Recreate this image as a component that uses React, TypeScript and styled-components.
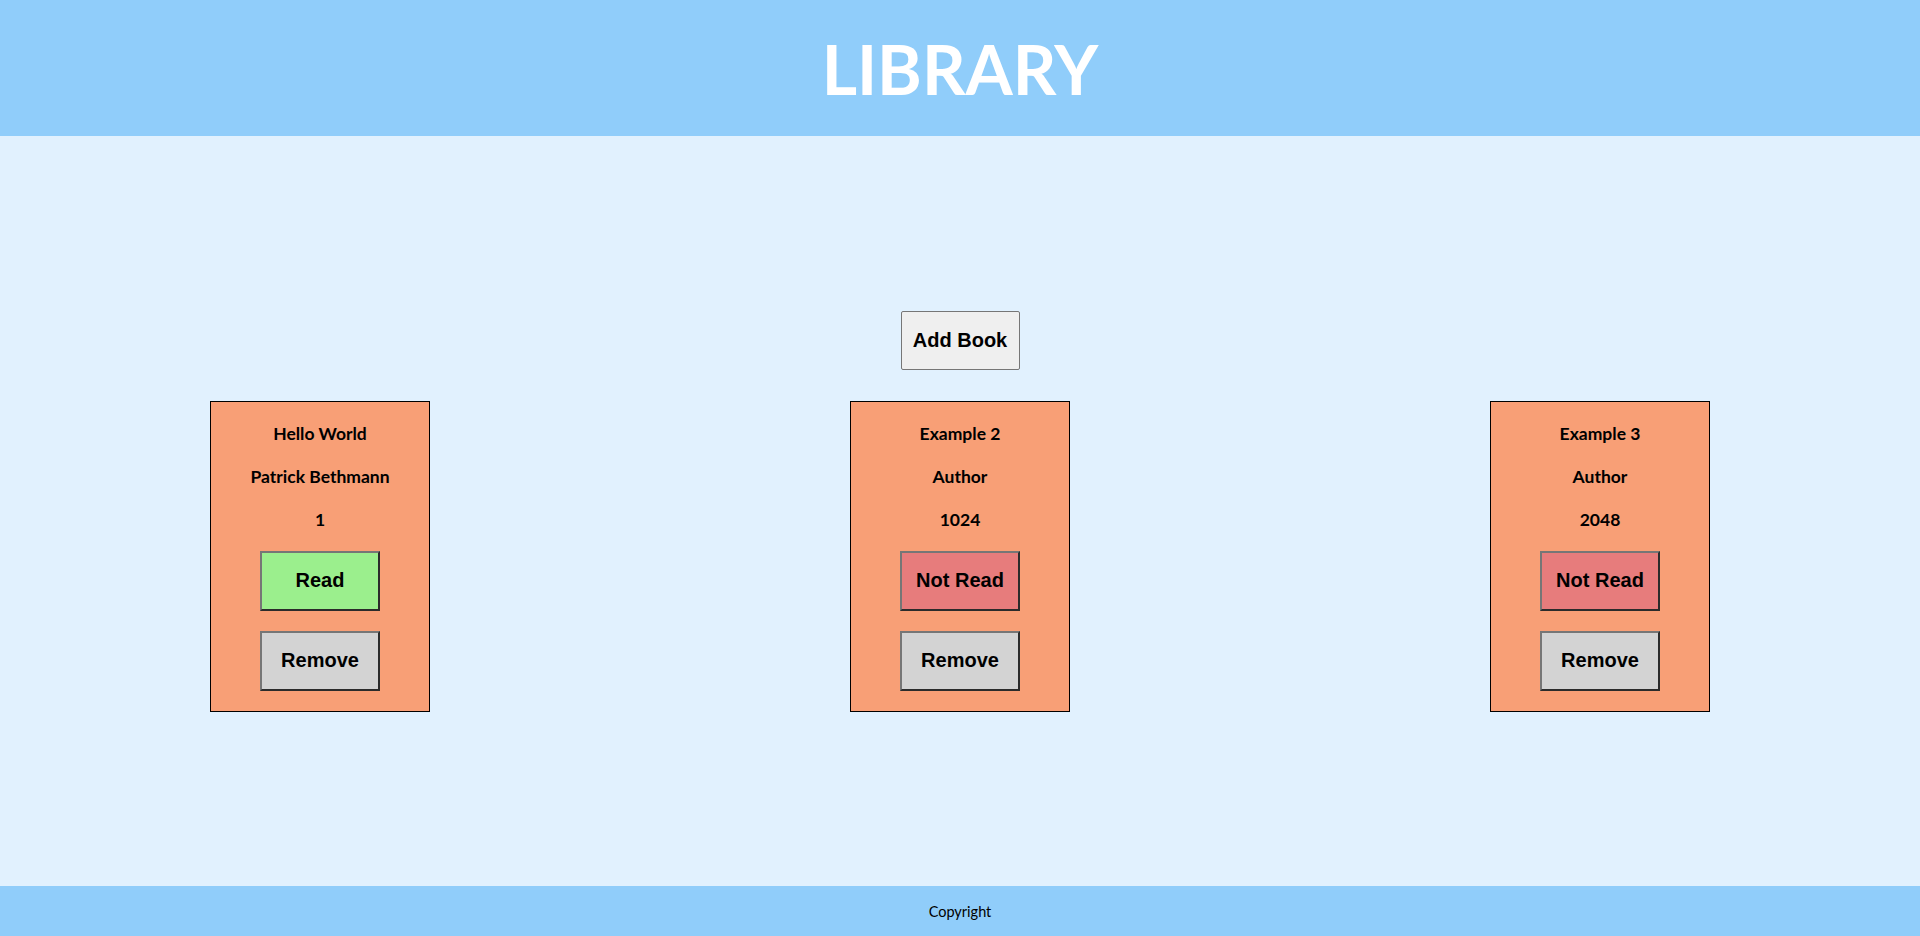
import React from "react";
import styled, { createGlobalStyle } from "styled-components";

const Global = createGlobalStyle`
  html, body { margin: 0; padding: 0; }
  body { font-family: Lato, "Open Sans", sans-serif; background: #e1f1fe; }
`;

const Page = styled.div`
  display: flex;
  flex-direction: column;
  min-height: 936px;
`;

const Header = styled.header`
  height: 136px;
  background: #90cdfa;
  display: flex;
  align-items: center;
  justify-content: center;
`;

const Title = styled.h1`
  margin: 0;
  padding-top: 2px;
  color: #ffffff;
  font-family: Lato, sans-serif;
  font-weight: 700;
  font-size: 68px;
  line-height: 1;
`;

const Main = styled.main`
  flex: 1;
  display: flex;
  flex-direction: column;
  align-items: center;
  justify-content: center;
  gap: 31px;
`;

const AddButton = styled.button`
  width: 119px;
  height: 59px;
  background: #efefef;
  border: 1px solid #767676;
  border-radius: 2px;
  font-family: Arial, "Liberation Sans", sans-serif;
  font-weight: 700;
  font-size: 20px;
  color: #000;
  padding: 0;
`;

const Grid = styled.div`
  width: 100%;
  display: grid;
  grid-template-columns: repeat(3, 1fr);
  justify-items: center;
`;

const Card = styled.div`
  width: 218px;
  border: 1px solid #000;
  background: #f89f76;
  padding: 20px 0;
  display: flex;
  flex-direction: column;
  align-items: center;
  gap: 20px;
`;

const Line = styled.p`
  margin: 0;
  font-family: Lato, sans-serif;
  font-weight: 700;
  font-size: 17.5px;
  line-height: 23px;
  color: #000;
`;

const CardButton = styled.button<{ $bg: string }>`
  width: 120px;
  height: 60px;
  background: ${(p) => p.$bg};
  border: 2px solid;
  border-color: #767676 #2b2b2b #2b2b2b #767676;
  font-family: Arial, "Liberation Sans", sans-serif;
  font-weight: 700;
  font-size: 20px;
  color: #000;
  padding: 0;
`;

const Footer = styled.footer`
  height: 50px;
  background: #90cdfa;
  display: flex;
  align-items: center;
  justify-content: center;
  font-family: Lato, sans-serif;
  font-size: 14.5px;
  color: #000;
`;

const books = [
  { title: "Hello World", author: "Patrick Bethmann", pages: "1", read: true },
  { title: "Example 2", author: "Author", pages: "1024", read: false },
  { title: "Example 3", author: "Author", pages: "2048", read: false },
];

export default function App() {
  return (
    <Page>
      <Global />
      <Header>
        <Title>LIBRARY</Title>
      </Header>
      <Main>
        <AddButton>Add Book</AddButton>
        <Grid>
          {books.map((b) => (
            <Card key={b.title}>
              <Line>{b.title}</Line>
              <Line>{b.author}</Line>
              <Line>{b.pages}</Line>
              <CardButton $bg={b.read ? "#9bef8d" : "#e77c7c"}>
                {b.read ? "Read" : "Not Read"}
              </CardButton>
              <CardButton $bg="#d3d3d3">Remove</CardButton>
            </Card>
          ))}
        </Grid>
      </Main>
      <Footer>Copyright</Footer>
    </Page>
  );
}
